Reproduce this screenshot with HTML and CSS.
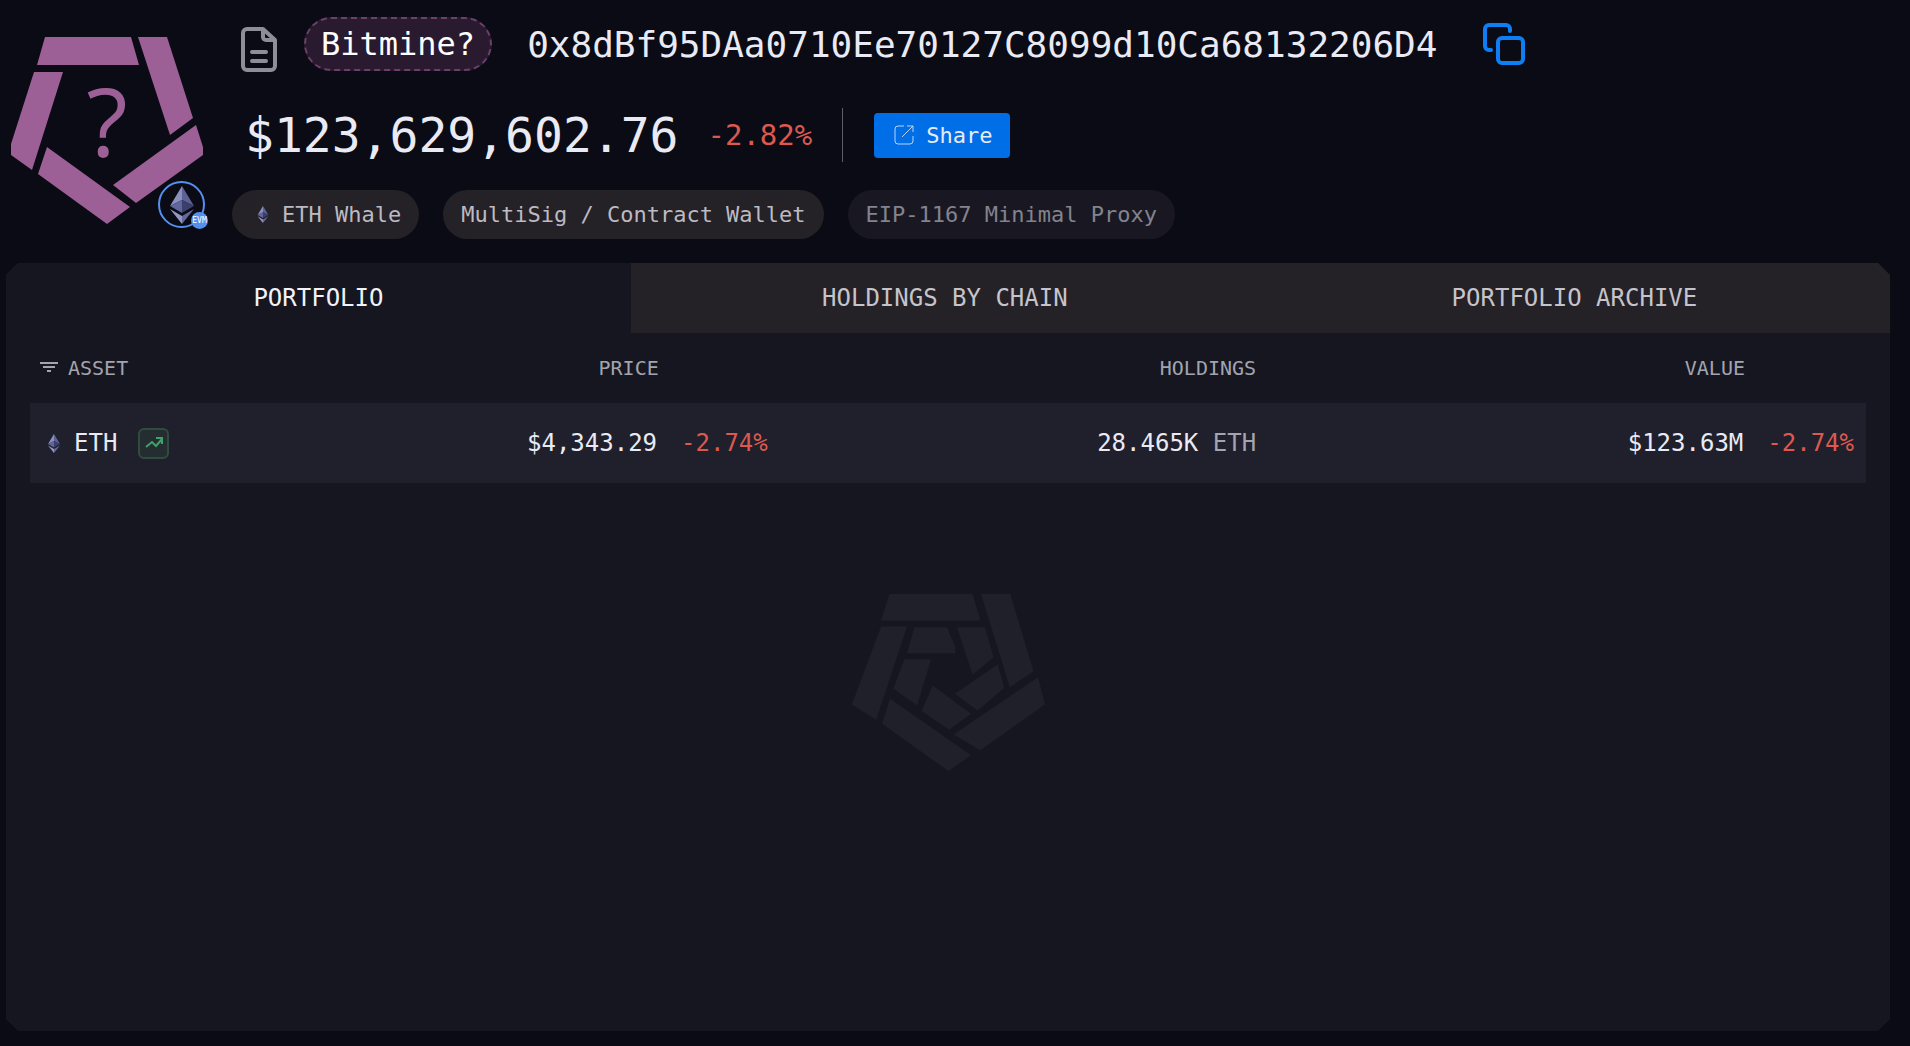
FILE: index.html
```html
<!DOCTYPE html>
<html lang="en">
<head>
    <meta charset="UTF-8">
    <meta name="viewport" content="width=device-width, initial-scale=1.0">
    <title>Bitmine? - Portfolio</title>
    <link rel="stylesheet" href="styles.css">
</head>
<body>
    <!-- shared ETH diamond -->
    <svg class="sprite" aria-hidden="true">
        <symbol id="eth" viewBox="0 0 24 38">
            <path fill="#8a8fbd" d="M12 0L0 20l12-6z"/>
            <path fill="#5d6294" d="M12 0l12 20-12-6z"/>
            <path fill="#60659b" d="M0 20l12-6v13z"/>
            <path fill="#3b3f6b" d="M24 20l-12-6v13z"/>
            <path fill="#9296c0" d="M0 23l12 7v8z"/>
            <path fill="#64689a" d="M24 23l-12 7v8z"/>
        </symbol>
    </svg>

    <header class="header">
        <div class="avatar">
            <svg class="avatar-logo" viewBox="0 0 192 188">
                <path d="M34 0H120L128 28H26z"/>
                <path d="M127 0H156L182 81L159 98z"/>
                <path d="M185 88L192 110V118L125 166L102 148z"/>
                <path d="M36 110L119 170L96 187L27 137z"/>
                <path d="M23 35H52L21 133L0 118V107z"/>
                <text x="96" y="120">?</text>
            </svg>
            <span class="chain-badge">
                <svg class="chain-eth"><use href="#eth"/></svg>
                <span class="evm">EVM</span>
            </span>
        </div>

        <div class="info">
            <div class="title-row">
                <svg class="doc-icon" viewBox="0 0 36 45">
                    <path d="M22 2H6a4 4 0 0 0-4 4v33a4 4 0 0 0 4 4h24a4 4 0 0 0 4-4V13zM22 2v8a3 3 0 0 0 3 3h9M11 25h14M11 34h14"/>
                </svg>
                <a href="#" class="entity">Bitmine?</a>
                <span class="address">0x8dBf95DAa0710Ee70127C8099d10Ca68132206D4</span>
                <button type="button" class="copy-btn" aria-label="Copy address">
                    <svg viewBox="0 0 42 42">
                        <rect x="15" y="15" width="25" height="25" rx="4"/>
                        <path d="M8 27H6a4 4 0 0 1-4-4V6a4 4 0 0 1 4-4h17a4 4 0 0 1 4 4v2"/>
                    </svg>
                </button>
            </div>

            <div class="balance-row">
                <span class="balance">$123,629,602.76</span>
                <span class="balance-change">-2.82%</span>
                <span class="divider"></span>
                <button type="button" class="share-btn">
                    <svg viewBox="0 0 20 20">
                        <path d="M10 1H4a3 3 0 0 0-3 3v12a3 3 0 0 0 3 3h12a3 3 0 0 0 3-3v-5M8 12L19 1M13 1h6v6"/>
                    </svg>
                    Share
                </button>
            </div>

            <div class="tags">
                <a href="#" class="tag tag-eth"><svg><use href="#eth"/></svg>ETH Whale</a>
                <a href="#" class="tag">MultiSig / Contract Wallet</a>
                <a href="#" class="tag tag-muted">EIP-1167 Minimal Proxy</a>
            </div>
        </div>
    </header>

    <main class="panel">
        <nav class="tabs">
            <button type="button" class="tab active">PORTFOLIO</button>
            <button type="button" class="tab">HOLDINGS BY CHAIN</button>
            <button type="button" class="tab">PORTFOLIO ARCHIVE</button>
        </nav>

        <div class="panel-body">
            <svg class="watermark" viewBox="90 70 582 532" aria-hidden="true">
                <path d="M205 70H455L478 150H180z"/>
                <path d="M480 70H568L638 302L567 350z"/>
                <path d="M652 320L672 402L478 540L398 492z"/>
                <path d="M207 385L450 555L382 602L183 460z"/>
                <path d="M180 168H258L165 448L92 402z"/>
                <path d="M280 170H378L403 230V248H258z"/>
                <path d="M408 170H492L518 260L455 312z"/>
                <path d="M530 282L550 352L470 420L402 370z"/>
                <path d="M335 345L450 430L385 478L302 422z"/>
                <path d="M250 266H330L288 405L217 355z"/>
            </svg>

            <table class="holdings">
                <thead>
                    <tr>
                        <th class="asset">
                            <div class="asset-head">
                                <svg class="filter-icon" viewBox="0 0 18 12">
                                    <path d="M0 1h18M3 5h12M7 9h4"/>
                                </svg>
                                ASSET
                            </div>
                        </th>
                        <th class="price">PRICE</th>
                        <th class="amount">HOLDINGS</th>
                        <th class="value">VALUE</th>
                    </tr>
                </thead>
                <tbody>
                    <tr>
                        <td class="asset">
                            <div class="asset-cell">
                                <svg class="asset-eth"><use href="#eth"/></svg>
                                <a href="#">ETH</a>
                                <button type="button" class="chart-btn" aria-label="Show chart">
                                    <svg viewBox="0 0 18 12">
                                        <path d="M1 10l6-5 4 4 6-7M11 1h6v6"/>
                                    </svg>
                                </button>
                            </div>
                        </td>
                        <td class="price">$4,343.29<span class="change">-2.74%</span></td>
                        <td class="amount">28.465K <span class="unit">ETH</span></td>
                        <td class="value">$123.63M<span class="change">-2.74%</span></td>
                    </tr>
                </tbody>
            </table>
        </div>
    </main>
</body>
</html>
```

FILE: styles.css
```css
* {
    box-sizing: border-box;
}

body {
    margin: 0;
    min-height: 100vh;
    display: flex;
    flex-direction: column;
    padding: 0 20px 15px 6px;
    background-color: #0a0b15;
    color: #e9eaf4;
    font-family: "DejaVu Sans Mono", monospace;
    font-size: 24px;
}

a {
    color: inherit;
    text-decoration: none;
}

button {
    font-family: inherit;
    color: inherit;
    border: none;
    padding: 0;
    background: none;
    cursor: pointer;
}

.sprite {
    position: absolute;
    width: 0;
    height: 0;
}

/* header */
.header {
    display: flex;
    gap: 29px;
    padding: 17px 0 24px 5px;
}

.avatar {
    position: relative;
    flex: none;
    width: 192px;
    padding-top: 20px;
}

.avatar-logo {
    display: block;
    width: 192px;
    height: 188px;
    fill: #9c5f96;
}

.avatar-logo text {
    font-family: "Open Sans", sans-serif;
    font-size: 96px;
    font-weight: 500;
    text-anchor: middle;
}

.chain-badge {
    position: absolute;
    right: -2px;
    bottom: 11px;
    width: 47px;
    height: 47px;
    display: flex;
    align-items: center;
    justify-content: center;
    border: 2px solid #5590ee;
    border-radius: 50%;
    background-color: #0a0b15;
}

.chain-eth {
    width: 24px;
    height: 38px;
}

.evm {
    position: absolute;
    right: -5px;
    bottom: -3px;
    width: 17px;
    height: 17px;
    border-radius: 50%;
    background-color: #5590ee;
    color: #fff;
    font-size: 8px;
    line-height: 17px;
    text-align: center;
}

.info {
    display: flex;
    flex-direction: column;
}

.title-row {
    display: flex;
    align-items: center;
    height: 54px;
    padding-left: 9px;
}

.doc-icon {
    width: 36px;
    height: 45px;
    margin-right: 27px;
    margin-top: 10px;
    fill: none;
    stroke: #8d8e98;
    stroke-width: 4;
    stroke-linecap: round;
    stroke-linejoin: round;
}

.entity {
    padding: 0 15px;
    margin-right: 35px;
    border: 2px dashed #6b4069;
    border-radius: 27px;
    background-color: #2a1a30;
    color: #fff;
    font-size: 32px;
    line-height: 50px;
}

.address {
    margin-right: 46px;
    font-size: 36px;
}

.copy-btn {
    width: 42px;
    height: 42px;
}

.copy-btn svg {
    display: block;
    fill: none;
    stroke: #0d7ff2;
    stroke-width: 4;
    stroke-linecap: round;
}

.balance-row {
    display: flex;
    align-items: center;
    height: 54px;
    margin: 37px 0 28px;
    padding-left: 13px;
}

.balance {
    margin-right: 29px;
    font-size: 48px;
}

.balance-change {
    font-size: 29px;
    color: #dd594f;
}

.divider {
    width: 1px;
    height: 54px;
    margin: 0 31px 0 30px;
    background-color: #5d5e69;
}

.share-btn {
    display: flex;
    align-items: center;
    gap: 12px;
    height: 45px;
    padding: 0 18px 0 20px;
    border-radius: 4px;
    background-color: #006ee6;
    color: #e9eaf4;
    font-size: 22px;
}

.share-btn svg {
    width: 20px;
    height: 20px;
    fill: none;
    stroke: #b9d6fa;
    stroke-width: 1;
}

.tags {
    display: flex;
    gap: 24px;
}

.tag {
    display: flex;
    align-items: center;
    height: 49px;
    padding: 0 18px;
    border-radius: 25px;
    background-color: #242127;
    color: #bcbac2;
    font-size: 22px;
}

.tag-eth {
    gap: 13px;
    padding-left: 25px;
}

.tag-eth svg {
    width: 12px;
    height: 17px;
}

.tag-muted {
    background-color: #191822;
    color: #83838f;
}

/* portfolio panel */
.panel {
    flex: 1;
    display: flex;
    flex-direction: column;
    background-color: #151620;
    clip-path: polygon(12px 0, calc(100% - 12px) 0, 100% 12px, 100% calc(100% - 12px), calc(100% - 12px) 100%, 12px 100%, 0 calc(100% - 12px), 0 12px);
}

.tabs {
    display: grid;
    grid-template-columns: 199fr 200fr 201fr;
}

.tab {
    height: 70px;
    background-color: #242127;
    color: #c6c4cb;
    font-size: 24px;
}

.tab.active {
    background-color: #151620;
    color: #f2f2fa;
}

.panel-body {
    flex: 1;
    display: grid;
    padding: 0 24px;
}

.watermark,
.holdings {
    grid-area: 1 / 1;
}

.watermark {
    width: 194px;
    height: 177px;
    place-self: center;
    fill: #1f202a;
}

.holdings {
    width: 100%;
    align-self: start;
    table-layout: fixed;
    border-collapse: collapse;
}

.holdings th {
    height: 70px;
    padding: 0;
    color: #a3a4af;
    font-size: 20px;
    font-weight: normal;
    text-align: right;
}

.holdings td {
    height: 80px;
    padding: 0;
    background-color: #1f202b;
    text-align: right;
}

.holdings .asset {
    width: 17%;
    text-align: left;
}

.holdings .price {
    width: 24%;
    padding-right: 15px;
}

.holdings .amount {
    width: 26%;
    padding-right: 4px;
}

.holdings .value {
    padding-right: 12px;
}

/* keep headings over the amounts, left of the change column */
.holdings th.price {
    padding-right: 124px;
}

.holdings th.value {
    padding-right: 121px;
}

.change {
    margin-left: 24px;
    color: #dd594f;
}

.unit {
    color: #a3a4af;
}

.asset-head,
.asset-cell {
    display: flex;
    align-items: center;
}

.asset-head {
    gap: 10px;
    padding-left: 10px;
}

.filter-icon {
    width: 18px;
    height: 12px;
    stroke: #a3a4af;
    stroke-width: 2;
}

.asset-cell {
    padding-left: 18px;
}

.asset-eth {
    width: 12px;
    height: 19px;
    margin-right: 14px;
}

.chart-btn {
    display: flex;
    align-items: center;
    justify-content: center;
    width: 31px;
    height: 31px;
    margin-left: 21px;
    border: 2px solid #2f4d3e;
    border-radius: 6px;
    background-color: #242e31;
}

.chart-btn svg {
    width: 18px;
    height: 12px;
    fill: none;
    stroke: #41a06b;
    stroke-width: 2;
}
```
